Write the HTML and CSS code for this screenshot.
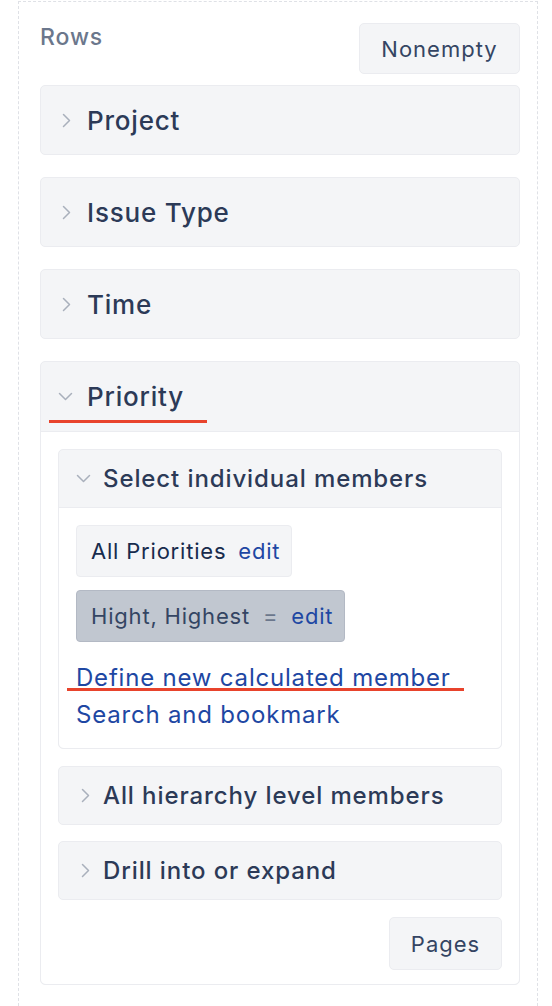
FILE: index.html
```html
<!DOCTYPE html>
<html>
<head>
<meta charset="utf-8">
<link rel="stylesheet" href="styles.css">
</head>
<body>
<div class="panel">
  <div class="panel-head">
    <div class="panel-title">Rows</div>
    <button class="btn">Nonempty</button>
  </div>
  <div class="dim">
    <div class="dim-head"><svg class="chev right" viewBox="0 0 9 15"><polyline points="1.5,1.5 7.5,7.5 1.5,13.5"/></svg><span>Project</span></div>
  </div>
  <div class="dim">
    <div class="dim-head"><svg class="chev right" viewBox="0 0 9 15"><polyline points="1.5,1.5 7.5,7.5 1.5,13.5"/></svg><span>Issue Type</span></div>
  </div>
  <div class="dim">
    <div class="dim-head"><svg class="chev right" viewBox="0 0 9 15"><polyline points="1.5,1.5 7.5,7.5 1.5,13.5"/></svg><span>Time</span></div>
  </div>
  <div class="dim open">
    <div class="dim-head"><svg class="chev down" viewBox="0 0 15 9"><polyline points="1.5,1.5 7.5,7.5 13.5,1.5"/></svg><span>Priority</span><i class="mark mark-priority"></i></div>
    <div class="dim-body">
      <div class="sec open">
        <div class="sec-head"><svg class="chev down" viewBox="0 0 15 9"><polyline points="1.5,1.5 7.5,7.5 13.5,1.5"/></svg><span>Select individual members</span></div>
        <div class="sec-body">
          <div class="chip"><span class="chip-name">All Priorities</span><a class="link">edit</a></div>
          <div class="chip selected"><span class="chip-name">Hight, Highest</span><span class="eq">=</span><a class="link">edit</a></div>
          <div class="links">
            <a class="link big">Define new calculated member</a>
            <a class="link big">Search and bookmark</a>
            <i class="mark mark-define"></i>
          </div>
        </div>
      </div>
      <div class="sec">
        <div class="sec-head"><svg class="chev right" viewBox="0 0 9 15"><polyline points="1.5,1.5 7.5,7.5 1.5,13.5"/></svg><span>All hierarchy level members</span></div>
      </div>
      <div class="sec">
        <div class="sec-head"><svg class="chev right" viewBox="0 0 9 15"><polyline points="1.5,1.5 7.5,7.5 1.5,13.5"/></svg><span>Drill into or expand</span></div>
      </div>
      <div class="foot"><button class="btn">Pages</button></div>
    </div>
  </div>
</div>
</body>
</html>
```
FILE: styles.css
```css
html, body { margin: 0; padding: 0; background: #fff; }
body { font-family: Inter, "Noto Sans", sans-serif; color: #344563; }
.panel {
  margin: 1px 0 0 18px;
  width: 520px;
  min-height: 1010px;
  border: 1px dashed #dfe1e6;
  border-bottom: none;
  padding: 21px 17px 0 21px;
  box-sizing: border-box;
}
.panel-head { display: flex; justify-content: space-between; align-items: flex-start; margin-bottom: 11px; }
.panel-title { font-size: 23px; line-height: 28px; color: #6b778c; font-weight: 500; letter-spacing: 0.9px; margin-top: 0; }
.btn {
  font-family: inherit;
  font-size: 22px;
  letter-spacing: 1px;
  color: #344563;
  background: #f4f5f7;
  border: 1px solid #ebecf0;
  border-radius: 5px;
  height: 51px;
  padding: 0;
  cursor: pointer;
}
.panel-head .btn { width: 161px; }
.dim {
  background: #f4f5f7;
  border: 1px solid #ebecf0;
  border-radius: 5px;
  margin-bottom: 22px;
}
.dim-head {
  position: relative;
  display: flex;
  align-items: center;
  height: 68px;
  padding-left: 21px;
  font-size: 26px;
  font-weight: 500;
  letter-spacing: 0.8px;
  color: #2c3a57;
}
.chev { fill: none; stroke: #a9b0bc; stroke-width: 1.5; stroke-linecap: round; stroke-linejoin: round; flex: none; }
.chev.right { width: 9px; height: 15px; margin-right: 16px; }
.chev.down { width: 15px; height: 9px; margin-left: -4px; margin-right: 14px; }
.dim.open .dim-head { border-bottom: 1px solid #ebecf0; height: 69px; }
.dim-body { background: #fff; padding: 17px 17px 14px 17px; border-radius: 0 0 5px 5px; }
.sec {
  background: #f4f5f7;
  border: 1px solid #ebecf0;
  border-radius: 5px;
  margin-bottom: 16px;
}
.sec-head {
  display: flex;
  align-items: center;
  height: 57px;
  padding-left: 22px;
  font-size: 24px;
  font-weight: 500;
  letter-spacing: 0.9px;
  color: #2c3a57;
}
.sec-head .chev.right { margin-right: 13px; }
.sec-head .chev.down { margin-left: -5px; margin-right: 12px; }
.sec.open { margin-bottom: 17px; }
.sec.open .sec-head { border-bottom: 1px solid #ebecf0; }
.sec-body { background: #fff; padding: 17px 17px 15px 17px; border-radius: 0 0 5px 5px; }
.chip {
  display: inline-flex;
  align-items: center;
  height: 50px;
  padding: 0 11px 0 14px;
  background: #f4f5f7;
  border: 1px solid #ebecf0;
  border-radius: 4px;
  font-size: 22px;
  letter-spacing: 0.8px;
  margin-bottom: 13px;
}
.chip-name { color: #172b4d; margin-right: 12px; }
.chip.selected { background: #c1c7d0; border-color: #b3b9c4; display: flex; width: max-content; }
.chip.selected .chip-name { color: #344563; margin-right: 13px; }
.eq { color: #6b778c; margin-right: 13px; }
.link { color: #1e47a3; text-decoration: none; cursor: pointer; }
.links { position: relative; display: flex; flex-direction: column; align-items: flex-start; margin-top: 17px; }
.link.big { font-size: 24px; line-height: 37px; letter-spacing: 0.8px; }
.foot { display: flex; justify-content: flex-end; padding-top: 1px; }
.foot .btn { width: 113px; height: 53px; }
.mark { position: absolute; display: block; background: #e8432c; height: 3px; }
.mark-priority { left: 8px; top: 58px; width: 158px; }
.mark-define { left: -9px; top: 29px; width: 397px; }
```
